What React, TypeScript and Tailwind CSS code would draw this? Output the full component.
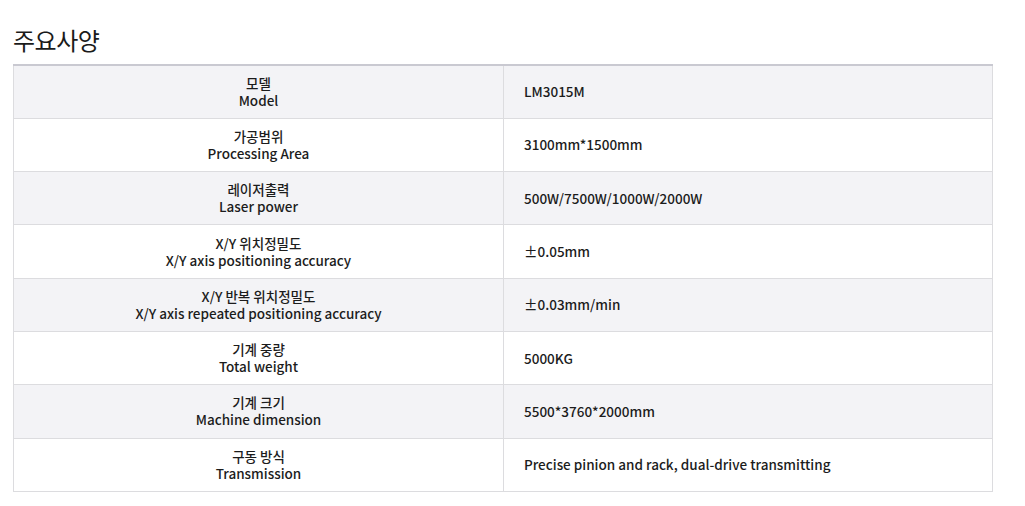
const specs = [
  { ko: "모델", en: "Model", value: "LM3015M" },
  { ko: "가공범위", en: "Processing Area", value: "3100mm*1500mm" },
  { ko: "레이저출력", en: "Laser power", value: "500W/7500W/1000W/2000W" },
  { ko: "X/Y 위치정밀도", en: "X/Y axis positioning accuracy", value: "±0.05mm" },
  { ko: "X/Y 반복 위치정밀도", en: "X/Y axis repeated positioning accuracy", value: "±0.03mm/min" },
  { ko: "기계 중량", en: "Total weight", value: "5000KG" },
  { ko: "기계 크기", en: "Machine dimension", value: "5500*3760*2000mm" },
  { ko: "구동 방식", en: "Transmission", value: "Precise pinion and rack, dual-drive transmitting" },
];

export default function App() {
  return (
    <div
      className="w-[1025px] h-[506px] bg-white px-[13px] pt-[26px] text-[#1c1c1c]"
      style={{ fontFamily: '"Noto Sans CJK KR", "Noto Sans", sans-serif' }}
    >
      <h2 className="text-[24px] leading-[28px] font-normal tracking-[-0.5px] text-[#1a1a1a]">주요사양</h2>

      {/* Spec table */}
      <table className="mt-[10px] w-[980px] border-collapse border-t-2 border-t-[#c9c9d1] text-[13.5px] leading-[17px] font-medium">
        <tbody>
          {specs.map((row, i) => (
            <tr key={row.en} className={i % 2 === 0 ? "bg-[#f3f3f6]" : "bg-white"}>
              <td className="h-[53.3px] w-[490px] border border-[#dcdcdf] text-center align-middle">
                <div>{row.ko}</div>
                <div>{row.en}</div>
              </td>
              <td className="h-[53.3px] border border-[#dcdcdf] pl-[20px] align-middle">{row.value}</td>
            </tr>
          ))}
        </tbody>
      </table>
    </div>
  );
}
